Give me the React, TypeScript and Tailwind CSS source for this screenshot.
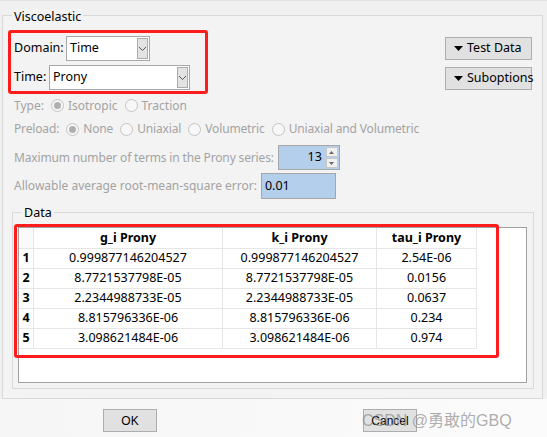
import React from "react";

const gray = "text-[#a3a3a3]";

function Radio({ checked }: { checked?: boolean }) {
  return (
    <span className="w-[13px] h-[13px] rounded-full border border-[#c4c4c4] bg-[#f7f7f7] flex items-center justify-center shrink-0">
      {checked && <span className="w-[7px] h-[7px] rounded-full bg-[#b0b0b0]" />}
    </span>
  );
}

function Chevron() {
  return (
    <svg width="9" height="6" viewBox="0 0 9 6">
      <polyline points="1,1 4.5,4.5 8,1" fill="none" stroke="#555" strokeWidth="1" />
    </svg>
  );
}

function Select({ value, width }: { value: string; width: string }) {
  return (
    <div className={`${width} h-[25px] bg-white border border-[#a8a8a8] flex items-center justify-between pl-[3px] pr-[1px]`}>
      <span>{value}</span>
      <span className="w-[11px] h-[21px] bg-[#e3e3e3] border border-[#ababab] flex items-center justify-center shrink-0">
        <Chevron />
      </span>
    </div>
  );
}

function DropButton({ label }: { label: string }) {
  return (
    <button className="w-[87px] h-[23px] bg-[#e1e1e1] border border-[#adadad] flex items-center pl-[8px] gap-[4px] whitespace-nowrap">
      <svg width="9" height="5" viewBox="0 0 9 5" className="shrink-0">
        <polygon points="0,0 9,0 4.5,5" fill="#000" />
      </svg>
      <span>{label}</span>
    </button>
  );
}

const rows = [
  ["1", "0.999877146204527", "0.999877146204527", "2.54E-06"],
  ["2", "8.7721537798E-05", "8.7721537798E-05", "0.0156"],
  ["3", "2.2344988733E-05", "2.2344988733E-05", "0.0637"],
  ["4", "8.815796336E-06", "8.815796336E-06", "0.234"],
  ["5", "3.098621484E-06", "3.098621484E-06", "0.974"],
];

export default function App() {
  return (
    <div className="w-[547px] h-[437px] bg-[#f0f0f0] font-['Noto_Sans',sans-serif] text-[12px] leading-none text-black flex flex-col relative overflow-hidden">
      <div className="h-[15px] border-t border-[#e2e2e2] shrink-0" />

      {/* Viscoelastic group */}
      <div className="relative ml-[2px] w-[541px] h-[384px] border border-[#d9d9d9] bg-[#f3f3f3] flex flex-col shrink-0">
        <span className="absolute left-[9px] top-[-7px] px-[2px] bg-[#f3f3f3] leading-[16px] text-[12.5px]">Viscoelastic</span>

        <div className="flex justify-between pt-[14px] text-[12.5px]">
          <div className="ml-[5px] w-[200px] h-[64px] border-[3px] border-[#ff1c1c] rounded-[3px] pl-[3px] pt-[3px] flex flex-col gap-[4px]">
            <div className="flex items-center h-[25px]">
              <span className="w-[52px]">Domain:</span>
              <Select value="Time" width="w-[84px]" />
            </div>
            <div className="flex items-center h-[25px]">
              <span className="w-[35px]">Time:</span>
              <Select value="Prony" width="w-[141px]" />
            </div>
          </div>
          <div className="mr-[10px] mt-[7px] flex flex-col gap-[7px]">
            <DropButton label="Test Data" />
            <DropButton label="Suboptions" />
          </div>
        </div>

        <div className={`h-[23px] flex items-center pl-[11px] ${gray}`}>
          <span>Type:</span>
          <span className="ml-[7px]"><Radio checked /></span>
          <span className="ml-[4px]">Isotropic</span>
          <span className="ml-[7px]"><Radio /></span>
          <span className="ml-[4px]">Traction</span>
        </div>
        <div className={`h-[24px] flex items-center pl-[11px] tracking-[-0.15px] ${gray}`}>
          <span>Preload:</span>
          <span className="ml-[7px]"><Radio checked /></span>
          <span className="ml-[4px]">None</span>
          <span className="ml-[7px]"><Radio /></span>
          <span className="ml-[4px]">Uniaxial</span>
          <span className="ml-[7px]"><Radio /></span>
          <span className="ml-[4px]">Volumetric</span>
          <span className="ml-[7px]"><Radio /></span>
          <span className="ml-[4px]">Uniaxial and Volumetric</span>
        </div>
        <div className={`mt-[4px] h-[25px] flex items-center pl-[11px] ${gray}`}>
          <span className="tracking-[-0.15px]">Maximum number of terms in the Prony series:</span>
          <div className="ml-[4px] w-[62px] h-[25px] bg-[#b4cfec] border border-[#a6a6a6] flex items-center justify-end pr-[1px] text-black text-[12.5px]">
            <span className="mr-[4px]">13</span>
            <div className="flex flex-col gap-[1px]">
              <span className="w-[12px] h-[10px] bg-[#f0f0f0] border border-[#c8c8c8] flex items-center justify-center">
                <svg width="5" height="3" viewBox="0 0 5 3"><polygon points="0,3 5,3 2.5,0" fill="#6a6a6a" /></svg>
              </span>
              <span className="w-[12px] h-[10px] bg-[#f0f0f0] border border-[#c8c8c8] flex items-center justify-center">
                <svg width="5" height="3" viewBox="0 0 5 3"><polygon points="0,0 5,0 2.5,3" fill="#6a6a6a" /></svg>
              </span>
            </div>
          </div>
        </div>
        <div className={`mt-[3px] h-[26px] flex items-center pl-[11px] ${gray}`}>
          <span>Allowable average root-mean-square error:</span>
          <div className="ml-[4px] w-[75px] h-[26px] bg-[#b4cfec] border border-[#a6a6a6] flex items-center pl-[3px] text-black text-[12.5px]">
            0.01
          </div>
        </div>

        {/* Data group */}
        <div className="relative mt-[13px] ml-[9px] w-[522px] h-[177px] border border-[#d9d9d9] flex flex-col text-[12.5px]">
          <span className="absolute left-[9px] top-[-8px] px-[2px] bg-[#f3f3f3] leading-[16px]">Data</span>
          <div className="mt-[14px] ml-[5px] w-[509px] h-[156px] border border-[#a0a0a0] bg-white">
            <div className="grid grid-cols-[15px_189px_154px_100px] w-max">
              <div className="h-[21px] border-r border-b border-[#e6e6e6] bg-[#fafafa]" />
              <div className="h-[21px] border-r border-b border-[#e6e6e6] flex items-center justify-center font-bold">g_i Prony</div>
              <div className="h-[21px] border-r border-b border-[#e6e6e6] flex items-center justify-center font-bold">k_i Prony</div>
              <div className="h-[21px] border-r border-b border-[#e6e6e6] flex items-center justify-center font-bold">tau_i Prony</div>
              {rows.map((r) => (
                <React.Fragment key={r[0]}>
                  <div className="h-[20px] border-r border-b border-[#e6e6e6] flex items-center justify-center font-bold">{r[0]}</div>
                  <div className="h-[20px] border-r border-b border-[#e6e6e6] flex items-center justify-center">{r[1]}</div>
                  <div className="h-[20px] border-r border-b border-[#e6e6e6] flex items-center justify-center">{r[2]}</div>
                  <div className="h-[20px] border-r border-b border-[#e6e6e6] flex items-center justify-center">{r[3]}</div>
                </React.Fragment>
              ))}
            </div>
          </div>
          {/* annotation box over table */}
          <div className="absolute left-[1px] top-[11px] w-[485px] h-[134px] border-[3px] border-[#ff1c1c] rounded-[3px]" />
        </div>
      </div>

      {/* bottom buttons */}
      <div className="flex-1 bg-gradient-to-r from-[#f6f6f6] to-[#fbfbfb] flex items-start pt-[10px]">
        <button className="ml-[103px] w-[54px] h-[23px] bg-[#e1e1e1] border border-[#adadad] font-['Liberation_Sans',sans-serif] text-[12px]">OK</button>
        <button className="ml-[206px] w-[54px] h-[23px] bg-[#e1e1e1] border border-[#adadad] font-['Liberation_Sans',sans-serif] text-[12px]">Cancel</button>
      </div>

      <span className="absolute left-[362px] top-[411px] text-[16px] leading-[20px] text-[#8a8a8a]/70 font-['Liberation_Sans','Noto_Sans_CJK_SC',sans-serif]">
        CSDN @勇敢的GBQ
      </span>
    </div>
  );
}
